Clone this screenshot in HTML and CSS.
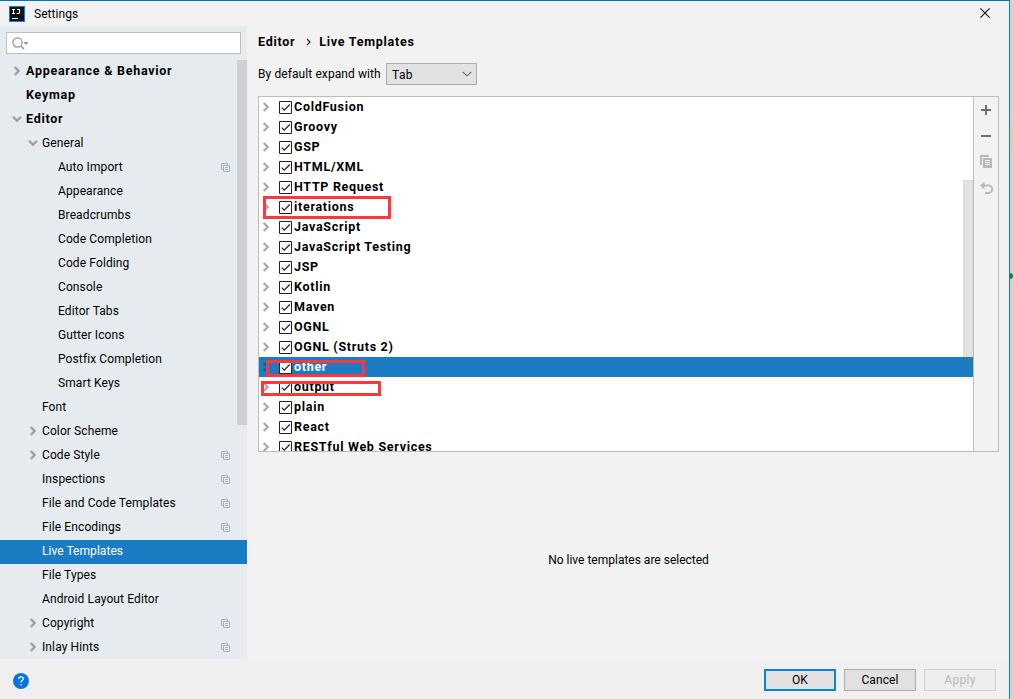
FILE: index.html
```
<!DOCTYPE html>
<html lang="en">
<head>
<meta charset="utf-8">
<title>Settings</title>
<link rel="stylesheet" href="styles.css">
</head>
<body>
<svg class="defs" width="0" height="0" aria-hidden="true">
  <symbol id="right" viewBox="0 0 10 10"><path d="M2.7 1 6.7 5 2.7 9" fill="none" stroke="currentColor" stroke-width="2.300"/></symbol>
  <symbol id="down" viewBox="0 0 10 10"><path d="M1 2.7 5 6.7 9 2.7" fill="none" stroke="currentColor" stroke-width="2.300"/></symbol>
  <symbol id="copy" viewBox="0 0 9 9"><path d="M2 6.5H.5v-6h6V2M2.5 2.5h6v6h-6zM4 4.5h3M4 6.5h3" fill="none" stroke="currentColor"/></symbol>
  <symbol id="check" viewBox="0 0 13 13"><path d="M.5.5h12v12H.5z" fill="#fff" stroke="#222"/><path d="M2.7 6.6 5.2 9.2 10.8 3.5" fill="none" stroke="#222" stroke-width="1.2"/></symbol>
</svg>
<div class="screen">
<div class="window">
  <header class="titlebar">
    <svg class="logo" width="16" height="16" viewBox="0 0 16 16"><path d="M0 0h16v16H0z" fill="#087cfa"/><path d="M1 1h14v14H1z" fill="#111"/><path d="M3 3.500h3M4.500 3.500v4M3 7.500h3M8 3.500h3M10.500 3.500v3.500q0 .5-.5.5H7.500" fill="none" stroke="#fff"/><path d="M3 12h6v1H3z" fill="#fff"/></svg>
    <span>Settings</span>
    <svg class="close" width="10" height="10" viewBox="0 0 10 10"><path d="m.4.4 9.200 9.200M9.600.4.4 9.600" stroke="#111" stroke-width="1.100"/></svg>
  </header>
  <div class="content">
    <aside class="sidebar">
      <div class="search"><svg width="17" height="13" viewBox="0 0 17 13"><circle cx="5.500" cy="5.500" r="4.600" fill="none" stroke="#8c959b" stroke-width="1.200"/><path d="m9 9 3 3" stroke="#8c959b" stroke-width="1.500"/><path d="M11.500 5h5L14 8z" fill="#8c959b"/></svg></div>
      <nav class="tree">
        <div class="item bold"><svg class="arrow"><use href="#right"/></svg>Appearance &amp; Behavior</div>
        <div class="item bold">Keymap</div>
        <div class="item bold"><svg class="arrow"><use href="#down"/></svg>Editor</div>
        <div class="item l1"><svg class="arrow"><use href="#down"/></svg>General</div>
        <div class="item l2">Auto Import<svg class="copy"><use href="#copy"/></svg></div>
        <div class="item l2">Appearance</div>
        <div class="item l2">Breadcrumbs</div>
        <div class="item l2">Code Completion</div>
        <div class="item l2">Code Folding</div>
        <div class="item l2">Console</div>
        <div class="item l2">Editor Tabs</div>
        <div class="item l2">Gutter Icons</div>
        <div class="item l2">Postfix Completion</div>
        <div class="item l2">Smart Keys</div>
        <div class="item l1">Font</div>
        <div class="item l1"><svg class="arrow"><use href="#right"/></svg>Color Scheme</div>
        <div class="item l1"><svg class="arrow"><use href="#right"/></svg>Code Style<svg class="copy"><use href="#copy"/></svg></div>
        <div class="item l1">Inspections<svg class="copy"><use href="#copy"/></svg></div>
        <div class="item l1">File and Code Templates<svg class="copy"><use href="#copy"/></svg></div>
        <div class="item l1">File Encodings<svg class="copy"><use href="#copy"/></svg></div>
        <div class="item l1 selected">Live Templates</div>
        <div class="item l1">File Types</div>
        <div class="item l1">Android Layout Editor</div>
        <div class="item l1"><svg class="arrow"><use href="#right"/></svg>Copyright<svg class="copy"><use href="#copy"/></svg></div>
        <div class="item l1"><svg class="arrow"><use href="#right"/></svg>Inlay Hints<svg class="copy"><use href="#copy"/></svg></div>
        <div class="side-thumb"></div>
      </nav>
    </aside>
    <main class="main">
      <div class="crumbs bold"><span>Editor</span><svg width="5" height="8" viewBox="0 0 5 8"><path d="M1 1 4 4 1 7" fill="none" stroke="#222" stroke-width="1.200"/></svg><span>Live Templates</span></div>
      <div class="expand"><span class="expand-label">By default expand with</span><div class="select"><span>Tab</span><svg width="10" height="6" viewBox="0 0 10 6"><path d="M.7.8 5 4.800 9.300.8" fill="none" stroke="#666" stroke-width="1.100"/></svg></div></div>
      <section class="templates">
        <div class="list">
          <div class="row"><svg class="arrow"><use href="#right"/></svg><svg class="box"><use href="#check"/></svg>ColdFusion</div>
          <div class="row"><svg class="arrow"><use href="#right"/></svg><svg class="box"><use href="#check"/></svg>Groovy</div>
          <div class="row"><svg class="arrow"><use href="#right"/></svg><svg class="box"><use href="#check"/></svg>GSP</div>
          <div class="row"><svg class="arrow"><use href="#right"/></svg><svg class="box"><use href="#check"/></svg>HTML/XML</div>
          <div class="row"><svg class="arrow"><use href="#right"/></svg><svg class="box"><use href="#check"/></svg>HTTP Request</div>
          <div class="row"><svg class="arrow"><use href="#right"/></svg><svg class="box"><use href="#check"/></svg>iterations</div>
          <div class="row"><svg class="arrow"><use href="#right"/></svg><svg class="box"><use href="#check"/></svg>JavaScript</div>
          <div class="row"><svg class="arrow"><use href="#right"/></svg><svg class="box"><use href="#check"/></svg>JavaScript Testing</div>
          <div class="row"><svg class="arrow"><use href="#right"/></svg><svg class="box"><use href="#check"/></svg>JSP</div>
          <div class="row"><svg class="arrow"><use href="#right"/></svg><svg class="box"><use href="#check"/></svg>Kotlin</div>
          <div class="row"><svg class="arrow"><use href="#right"/></svg><svg class="box"><use href="#check"/></svg>Maven</div>
          <div class="row"><svg class="arrow"><use href="#right"/></svg><svg class="box"><use href="#check"/></svg>OGNL</div>
          <div class="row"><svg class="arrow"><use href="#right"/></svg><svg class="box"><use href="#check"/></svg>OGNL (Struts 2)</div>
          <div class="row selected"><svg class="arrow"><use href="#right"/></svg><svg class="box"><use href="#check"/></svg>other</div>
          <div class="row"><svg class="arrow"><use href="#right"/></svg><svg class="box"><use href="#check"/></svg>output</div>
          <div class="row"><svg class="arrow"><use href="#right"/></svg><svg class="box"><use href="#check"/></svg>plain</div>
          <div class="row"><svg class="arrow"><use href="#right"/></svg><svg class="box"><use href="#check"/></svg>React</div>
          <div class="row"><svg class="arrow"><use href="#right"/></svg><svg class="box"><use href="#check"/></svg>RESTful Web Services</div>
          <div class="list-thumb"></div>
          <div class="mark mark-iterations"></div>
          <div class="mark mark-other"></div>
          <div class="mark mark-output"></div>
        </div>
        <div class="tools">
          <svg width="14" height="14" viewBox="0 0 14 14"><path d="M2 7h10M7 2v10" stroke="#6e6e6e" stroke-width="2"/></svg>
          <svg width="14" height="14" viewBox="0 0 14 14"><path d="M2 7h10" stroke="#6e6e6e" stroke-width="2"/></svg>
          <svg width="14" height="14" viewBox="0 0 14 14"><path d="M1 0h9v2H3v8H1zM4 3h9v10H4z" fill="#b9b9b9"/><path d="M6 5.500h5M6 7.500h5M6 9.500h5" stroke="#f2f2f2"/></svg>
          <svg width="14" height="14" viewBox="0 0 14 14"><path d="M4 4.500h5.500a3.500 3.500 0 0 1 0 7.500H6" fill="none" stroke="#b9b9b9" stroke-width="2"/><path d="M5.500.5v8L1 4.500z" fill="#b9b9b9"/></svg>
        </div>
      </section>
      <div class="empty">No live templates are selected</div>
    </main>
  </div>
  <footer class="footer">
    <svg class="help" width="16" height="16" viewBox="0 0 16 16"><circle cx="8" cy="8" r="8" fill="#0a74da"/><path d="M5.700 6.100c0-3 4.600-3 4.600-.3 0 1.700-2.300 1.800-2.300 3.700M8 11v1.400" fill="none" stroke="#fff" stroke-width="1.200"/></svg>
    <div class="button ok">OK</div>
    <div class="button">Cancel</div>
    <div class="button disabled">Apply</div>
  </footer>
</div>
<div class="behind"><div class="strip"></div><div class="dot"></div></div>
</div>
</body>
</html>
```
FILE: styles.css
```
* { box-sizing: border-box; }
body { margin: 0; font: 12px/24px Roboto, "Liberation Sans", sans-serif; color: #000; overflow: hidden; }
svg { display: block; flex: none; }
.defs { position: absolute; }
.screen { display: flex; width: 1013px; height: 699px; }
.window { display: flex; flex-direction: column; width: 1010px; background: #f2f2f2; border-top: 1px solid #0a6fc7; border-right: 1px solid #1a76c4; }
.titlebar { display: flex; align-items: center; height: 25px; padding: 0 19px 0 9px; }
.titlebar span { margin-left: 9px; line-height: 26px; letter-spacing: .05px; }
.close { margin: 0 0 2px auto; }
.content { display: flex; height: 633px; }
.sidebar { width: 247px; background: #e6ebef; overflow: hidden; }
.search { display: flex; align-items: center; width: 235px; height: 22px; margin: 6px 0 6px 6px; padding-left: 5px; background: #fff; border: 1px solid #bdbdbd; }
.tree { position: relative; }
.item { position: relative; display: flex; align-items: center; height: 24px; padding: 0 17px 2px 26px; white-space: nowrap; letter-spacing: .11px; }
.item.l1 { padding-left: 42px; }
.item.l2 { padding-left: 58px; }
.item.selected { background: #1a7dc4; color: #fff; letter-spacing: .05px; }
.bold, .item.bold { font-size: 12.5px; font-weight: 700; letter-spacing: .73px; }
.arrow { width: 10px; height: 10px; color: #9b9fa2; }
.item .arrow { margin: 0 4px 0 -14px; }
.copy { width: 9px; height: 9px; margin: 0 0 0 auto; color: #a9b4ba; }
.side-thumb { position: absolute; right: 0; top: 0; width: 10px; height: 365px; background: #cdd0d5; }
.main { display: flex; flex-direction: column; flex: 1; padding: 4px 10px 0 11px; }
.crumbs { display: flex; align-items: center; height: 24px; }
.crumbs svg { margin: 0 8px 0 11px; }
.expand { display: flex; align-items: center; height: 22px; margin-top: 9px; }
.expand-label { width: 123px; letter-spacing: .09px; white-space: nowrap; }
.select { display: flex; align-items: center; justify-content: space-between; width: 91px; height: 22px; margin-left: 5px; padding: 0 4px 0 5px; background: #e2e2e2; border: 1px solid #adadad; letter-spacing: .4px; }
.select span { padding-top: 1px; }
.templates { display: flex; height: 356px; margin-top: 11px; border: 1px solid #bcbcbc; }
.list { position: relative; width: 714px; height: 354px; background: #fff; overflow: hidden; }
.row { display: flex; align-items: center; height: 20px; padding-left: 2px; font-size: 12.5px; line-height: 20px; font-weight: 700; letter-spacing: .7px; white-space: nowrap; }
.row .arrow { margin-right: 8px; color: #aaa; }
.box { width: 13px; height: 13px; margin: 1px 2px 0 0; }
.row.selected { background: #1a7dc4; color: #fff; }
.row.selected .arrow { color: #155b8e; }
.list-thumb { position: absolute; right: 0; top: 83px; width: 10px; height: 184px; background: rgba(105,105,105,.2); border: 1px solid rgba(90,90,90,.04); }
.mark { position: absolute; border: 3px solid #fc363a; }
.mark-iterations { left: 4px; top: 99px; width: 128px; height: 23px; }
.mark-other { left: 7px; top: 263px; width: 99px; height: 17px; }
.mark-output { left: 2px; top: 284px; width: 120px; height: 15px; }
.tools { display: flex; flex-direction: column; align-items: center; gap: 12px; width: 25px; padding-top: 6px; border-left: 1px solid #bcbcbc; }
.empty { display: flex; flex: 1; align-items: center; justify-content: center; margin-top: 9px; }
.footer { display: flex; align-items: center; gap: 8px; height: 40px; padding: 2px 13px 0; background: #f0f0f0; }
.help { margin: 1px auto 0 0; }
.button { display: flex; align-items: center; justify-content: center; width: 72px; height: 22px; background: #e1e1e1; border: 1px solid #adadad; letter-spacing: .1px; }
.button.ok { border: 2px solid #0a84dc; }
.button.disabled { color: #bababa; background: #ededed; border-color: #d0d0d0; letter-spacing: .3px; }
.behind { width: 3px; background: #d2d2d2; }
.strip { height: 24px; margin-top: 126px; background: #dcd0aa; }
.dot { width: 3px; height: 6px; margin-top: 123px; background: #14851e; border-radius: 0 3px 3px 0; }
```
